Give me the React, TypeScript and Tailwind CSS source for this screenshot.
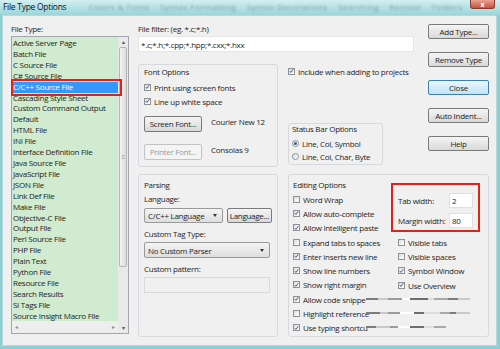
import React from 'react'

const fileTypes = [
  "Active Server Page",
  "Batch File",
  "C Source File",
  "C# Source File",
  "C/C++ Source File",
  "Cascading Style Sheet",
  "Custom Command Output",
  "Default",
  "HTML File",
  "INI File",
  "Interface Definition File",
  "Java Source File",
  "JavaScript File",
  "JSON File",
  "Link Def File",
  "Make File",
  "Objective-C File",
  "Output File",
  "Perl Source File",
  "PHP File",
  "Plain Text",
  "Python File",
  "Resource File",
  "Search Results",
  "SI Tags File",
  "Source Insight Macro File",
];

function Check(props: { checked?: boolean }) {
  return (
    <span className="w-[7px] h-[7px] border border-[#8e9296] bg-linear-to-br from-[#dcdcdc] to-white flex items-center justify-center shrink-0">
      {props.checked && (
        <svg width="6" height="6" viewBox="0 0 6 6">
          <path d="M0.9 3.1 L2.3 4.7 L5.2 0.9" stroke="#3d5273" strokeWidth="1.1" fill="none" />
        </svg>
      )}
    </span>
  );
}

function CheckRow(props: { label: string; checked?: boolean }) {
  return (
    <div className="flex items-center gap-[3px] h-[14.3px] whitespace-nowrap">
      <Check checked={props.checked} />
      <span>{props.label}</span>
    </div>
  );
}

function Radio(props: { label: string; on?: boolean }) {
  return (
    <div className="flex items-center gap-[3px] h-[13px] whitespace-nowrap">
      <span className="w-[7px] h-[7px] rounded-full border border-[#8e9296] bg-linear-to-br from-[#dcdcdc] to-white flex items-center justify-center">
        {props.on && <span className="w-[3px] h-[3px] rounded-full bg-[#2d5f95]" />}
      </span>
      <span>{props.label}</span>
    </div>
  );
}

function Btn(props: { label: string; w?: string; disabled?: boolean; primary?: boolean }) {
  let cls = "border-[#7a7a7a] from-[#f5f5f5] to-[#d9d9d9] text-[#1e1e1e]";
  if (props.primary) cls = "border-[#3c7fb1] from-[#eaf6fd] to-[#bfe4f8] text-[#1e1e1e]";
  if (props.disabled) cls = "border-[#c3c3c3] from-[#f4f4f4] to-[#f4f4f4] text-[#9a9a9a]";
  return (
    <div className={"h-[15px] border rounded-[2px] bg-linear-to-b flex items-center justify-center whitespace-nowrap " + cls + " " + (props.w || "")}>
      {props.label}
    </div>
  );
}

function Select(props: { label: string; w: string }) {
  return (
    <div className={"h-[15px] border border-[#9a9a9a] rounded-[2px] bg-linear-to-b from-[#f4f4f4] to-[#dedede] flex items-center pl-[3px] pr-[5px] justify-between " + props.w}>
      <span>{props.label}</span>
      <span className="w-0 h-0 border-l-[2.5px] border-r-[2.5px] border-t-[3px] border-l-transparent border-r-transparent border-t-[#333]" />
    </div>
  );
}

// screenshot has scrambled pixels over the last rows of the editing options
function Glitch(props: { left: number; top: number; widths: number[] }) {
  const shades = ["#7d7d7d", "#c9c9c9", "#9b9b9b", "#ffffff", "#6e6e6e", "#dcdcdc", "#a8a8a8"];
  return (
    <div className="absolute flex items-center h-[3px]" style={{ left: props.left, top: props.top }}>
      {props.widths.map((w, i) => (
        <span key={i} className="h-[2px]" style={{ width: w, background: shades[i % shades.length] }} />
      ))}
    </div>
  );
}

export default function App() {
  return (
    <div className="w-[500px] h-[349px] bg-[#8ecfd3] flex flex-col overflow-hidden font-['Open_Sans','Noto_Sans',sans-serif] text-[8px] leading-[11px] tracking-[-0.28px] text-[#1e1e1e]">
      {/* title bar */}
      <div className="h-[15px] bg-linear-to-b from-[#d3eff1] via-[#b6e2e5] to-[#9ad5d9] flex items-start relative">
        <span className="ml-[3px] mt-[1px] text-[8.5px] text-[#111]">File Type Options</span>
        <span className="ml-[22px] mt-[1px] blur-[1.3px] opacity-40 text-[#333] whitespace-nowrap tracking-[0.5px]">
          Colors &amp; Fonts &nbsp;&nbsp; Syntax Formatting &nbsp;&nbsp; Syntax Decorations &nbsp;&nbsp; Searching &nbsp;&nbsp; Remote &nbsp;&nbsp; Folders
        </span>
        <div className="absolute right-[5px] top-0 w-[25px] h-[9px] rounded-b-[3px] bg-linear-to-b from-[#e8a191] to-[#c8503c] border border-t-0 border-[#8c3a2e] flex items-center justify-center text-white text-[7px] font-bold leading-none">
          x
        </div>
      </div>

      {/* client */}
      <div className="bg-[#f0f0f0] ml-[2px] mr-[3px] h-[331px] flex pt-[7px] pl-[8px] border border-[#b5d9dc]">
        {/* file type list */}
        <div className="w-[118px] flex flex-col">
          <div className="h-[13px]">File Type:</div>
          <div className="h-[298px] border border-[#a0a8ad] flex relative">
            <div className="flex-1 flex flex-col">
              <div className="flex-1 bg-[#d0ebcf] overflow-hidden pt-[1px]">
                {fileTypes.map((t, i) => (
                  <div
                    key={t}
                    className={"h-[10.92px] leading-[10.92px] pl-[1px] whitespace-nowrap " + (i === 4 ? "bg-[#3399ff] text-white" : "")}
                  >
                    {t}
                  </div>
                ))}
              </div>
              <div className="h-[12px] bg-[#eeeeee] flex items-center justify-between px-[3px] text-[#8a8a8a] text-[6px]">
                <span>◂</span>
                <span>▸</span>
              </div>
            </div>
            <div className="w-[10px] bg-[#e9e9e9] flex flex-col items-center text-[#555] text-[6px] leading-[10px]">
              <span className="h-[10px]">▴</span>
              <div className="w-[8px] h-[220px] border border-[#b5b5b5] rounded-[2px] bg-linear-to-r from-[#f3f3f3] to-[#dcdcdc] flex items-center justify-center text-[#999]">
                ≡
              </div>
              <span className="mt-auto h-[10px]">▾</span>
            </div>
            <div className="absolute left-[-1px] top-[42px] w-[111px] h-[17px] border-2 border-[#e3201b]" />
          </div>
        </div>

        {/* right side */}
        <div className="ml-[9px] w-[351px] flex flex-col">
          <div className="h-[151px] flex">
            <div className="w-[276px] flex flex-col">
              <div className="h-[13px]">File filter: (eg. *.c;*.h)</div>
              <div className="h-[16px] bg-white border border-[#e6e6e6] flex items-center px-[2px]">
                *.c;*.h;*.cpp;*.hpp;*.cxx;*.hxx
              </div>
              <div className="mt-[12px] flex">
                <div className="w-[140px] h-[103px] border border-[#d6dadd] rounded-[3px] px-[5px] pt-[1px] flex flex-col">
                  <div className="h-[11px]">Font Options</div>
                  <div className="mt-[3px]">
                    <CheckRow label="Print using screen fonts" checked />
                    <CheckRow label="Line up white space" checked />
                  </div>
                  <div className="mt-[7px] flex items-start">
                    <Btn label="Screen Font..." w="w-[58px] h-[16px]" />
                    <span className="ml-[9px]">Courier New 12</span>
                  </div>
                  <div className="mt-[12px] flex items-start">
                    <Btn label="Printer Font..." w="w-[58px] h-[16px]" disabled />
                    <span className="ml-[9px]">Consolas 9</span>
                  </div>
                </div>
                <div className="ml-[10px] w-[95px] flex flex-col">
                  <div className="h-[14px] flex items-center">
                    <CheckRow label="Include when adding to projects" checked />
                  </div>
                  <div className="mt-[45px] h-[42px] border border-[#d6dadd] rounded-[3px] px-[3px] flex flex-col">
                    <div className="h-[10px] leading-[10px]">Status Bar Options</div>
                    <div className="mt-[3px]">
                      <Radio label="Line, Col, Symbol" on />
                      <Radio label="Line, Col, Char, Byte" />
                    </div>
                  </div>
                </div>
              </div>
            </div>
            <div className="ml-[14px] w-[61px] pt-[1px] flex flex-col gap-[13px]">
              <Btn label="Add Type..." />
              <Btn label="Remove Type" />
              <Btn label="Close" primary />
              <Btn label="Auto Indent..." />
              <Btn label="Help" />
            </div>
          </div>

          <div className="flex gap-[10px] h-[163px]">
            {/* parsing */}
            <div className="w-[140px] border border-[#d6dadd] rounded-[3px] px-[5px] pt-[4px] flex flex-col">
              <div className="h-[11px]">Parsing</div>
              <div className="mt-[3px] h-[11px]">Language:</div>
              <div className="mt-[4px] flex">
                <Select label="C/C++ Language" w="w-[80px]" />
                <Btn label="Language..." w="w-[46px] ml-[4px]" />
              </div>
              <div className="mt-[5px] h-[11px]">Custom Tag Type:</div>
              <div className="mt-[3px]">
                <Select label="No Custom Parser" w="w-[126px] h-[16px]" />
              </div>
              <div className="mt-[5px] h-[11px]">Custom pattern:</div>
              <div className="mt-[3px] w-[126px] h-[16px] border border-[#dadada] bg-[#f0f0f0]" />
            </div>

            {/* editing */}
            <div className="w-[201px] border border-[#d6dadd] rounded-[3px] flex relative">
              <div className="w-[100px] pl-[4px] pt-[4px] flex flex-col overflow-hidden">
                <div className="h-[12px]">Editing Options</div>
                <div className="mt-[1px]">
                  <CheckRow label="Word Wrap" />
                  <CheckRow label="Allow auto-complete" checked />
                  <CheckRow label="Allow intelligent paste" checked />
                  <CheckRow label="Expand tabs to spaces" />
                  <CheckRow label="Enter inserts new line" checked />
                  <CheckRow label="Show line numbers" checked />
                  <CheckRow label="Show right margin" checked />
                  <CheckRow label="Allow code snippe" checked />
                  <CheckRow label="Highlight reference" />
                  <CheckRow label="Use typing shortcu" checked />
                </div>
              </div>
              <div className="flex-1 flex flex-col">
                <div className="mt-[8px] ml-[2px] w-[89px] h-[49px] border-2 border-[#e3201b] pl-[5px] pt-[8px] flex flex-col">
                  <div className="flex items-center h-[15px]">
                    <span className="w-[51px]">Tab width:</span>
                    <span className="w-[24px] h-[15px] bg-white border border-[#e0e0e0] pl-[2px] leading-[14px]">2</span>
                  </div>
                  <div className="mt-[5px] flex items-center h-[15px]">
                    <span className="w-[51px] whitespace-nowrap">Margin width:</span>
                    <span className="w-[24px] h-[15px] bg-white border border-[#e0e0e0] pl-[2px] leading-[14px]">80</span>
                  </div>
                </div>
                <div className="mt-[3px] pl-[9px]">
                  <CheckRow label="Visible tabs" />
                  <CheckRow label="Visible spaces" />
                  <CheckRow label="Symbol Window" checked />
                  <CheckRow label="Use Overview" checked />
                </div>
              </div>
              <Glitch left={77} top={122} widths={[12, 10, 14, 8, 18, 6, 14, 10, 12]} />
              <Glitch left={77} top={136} widths={[14, 8, 12, 14, 10, 16, 10, 6, 14]} />
              <Glitch left={77} top={150} widths={[10, 14, 8, 12, 14, 10, 12]} />
            </div>
          </div>
        </div>
      </div>
    </div>
  );
}
